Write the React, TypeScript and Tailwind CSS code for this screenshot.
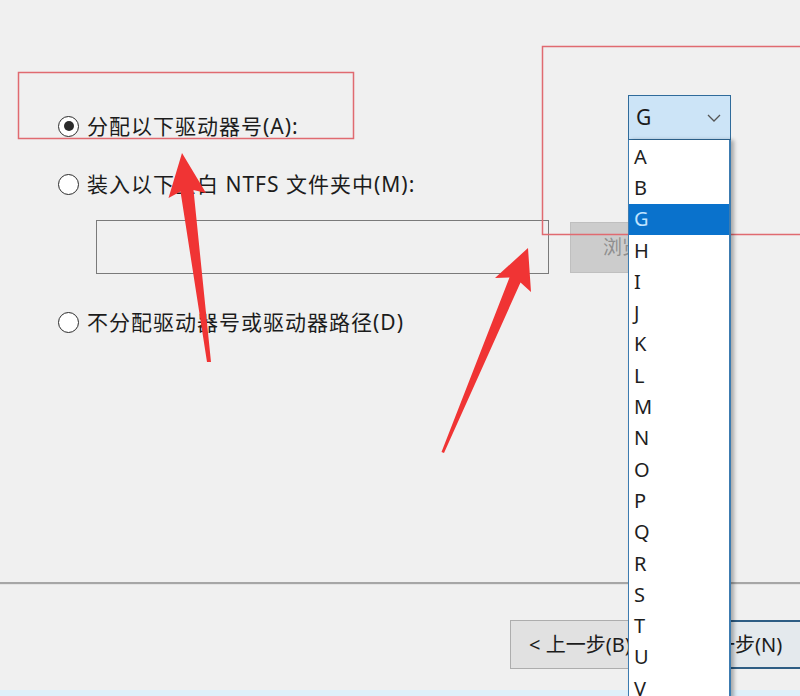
import React from "react";

const FONT = '"Noto Sans", "Noto Sans CJK SC", sans-serif';

function Radio({ checked, label }: { checked?: boolean; label: string }) {
  return (
    <div className="flex items-center h-[22px]">
      <div className="w-[21px] h-[21px] rounded-full border-[1.5px] border-[#2b2b2b] bg-white flex items-center justify-center shrink-0">
        {checked && <div className="w-[10px] h-[10px] rounded-full bg-[#2b2b2b]" />}
      </div>
      <span className="ml-[8px] text-[21px] tracking-[1px] leading-none text-[#1c1c1c] whitespace-nowrap">{label}</span>
    </div>
  );
}

const LETTERS = ["A", "B", "G", "H", "I", "J", "K", "L", "M", "N", "O", "P", "Q", "R", "S", "T", "U", "V"];

export default function App() {
  return (
    <div
      className="relative w-[800px] h-[696px] bg-[#f0f0f0] overflow-hidden flex flex-col"
      style={{ fontFamily: FONT }}
    >
      {/* top area */}
      <div className="flex pt-[95px]">
        <div className="w-[628px] shrink-0 pl-[58px] pt-[20px]">
          <Radio checked label="分配以下驱动器号(A):" />
          <div className="mt-[36px]">
            <Radio label="装入以下空白 NTFS 文件夹中(M):" />
          </div>
          <div className="flex items-center mt-[25px] ml-[38px]">
            <div className="w-[453px] h-[54px] border border-[#7a7a7a] bg-[#f0f0f0] shrink-0" />
            <div className="ml-[21px] w-[58px] h-[51px] border border-r-0 border-[#bfbfbf] bg-[#cccccc] shrink-0 flex items-center pl-[32px] text-[19px] text-[#8f8f8f] whitespace-nowrap overflow-hidden">
              浏览(R)...
            </div>
          </div>
          <div className="mt-[37px]">
            <Radio label="不分配驱动器号或驱动器路径(D)" />
          </div>
        </div>
        {/* combo box */}
        <div className="relative w-[103px] h-[45px] shrink-0">
          <div className="w-full h-full border border-[#2f6b9b] bg-[#cce4f7] flex items-center justify-between pl-[7px] pr-[9px]">
            <span className="text-[21px] text-[#1a1a1a] leading-none">G</span>
            <svg width="14" height="8" viewBox="0 0 14 8" fill="none">
              <path d="M1 1 L7 7 L13 1" stroke="#555" strokeWidth="1.3" />
            </svg>
          </div>
          <div className="absolute left-0 top-full w-full h-[600px] bg-white border-l border-r-2 border-[#3c7bb0] shadow-[3px_0_4px_rgba(0,0,0,0.3)] z-30 pt-[1px]">
            {LETTERS.map((l) => (
              <div
                key={l}
                className={`h-[31.3px] flex items-center pl-[5px] text-[20px] leading-none ${
                  l === "G" ? "bg-[#0a72cc] text-[#bfe3ff]" : "text-[#1e1e1e]"
                }`}
              >
                {l}
              </div>
            ))}
          </div>
        </div>
      </div>

      {/* bottom area */}
      <div className="mt-auto">
        <div className="h-[2px] bg-[#a6a6a6]" />
        <div className="h-[1px] bg-[#e4e4e4]" />
        <div className="flex pl-[510px] pt-[35px]">
          <div className="w-[150px] h-[49px] shrink-0 border border-[#adadad] bg-[#e1e1e1] flex items-center pl-[18px] text-[20px] text-[#1c1c1c] whitespace-nowrap">
            &lt; 上一步(B)
          </div>
          <div className="w-[150px] h-[49px] shrink-0 border-2 border-[#2e5d84] bg-[#e4e9ed] flex items-center pl-[33px] text-[20px] text-[#1c1c1c] whitespace-nowrap">
            下一步(N)
          </div>
        </div>
        <div className="h-[21px]" />
        <div className="h-[6px] bg-[#dff0fa]" />
      </div>

      {/* annotations */}
      <svg className="absolute inset-0 z-20 pointer-events-none" width="800" height="696" viewBox="0 0 800 696">
        <rect x="18.5" y="72.5" width="335" height="66" fill="none" stroke="#e06a70" strokeWidth="1.5" />
        <rect x="542.5" y="46.5" width="270" height="188" fill="none" stroke="#e06a70" strokeWidth="1.5" />
        <polygon
          points="182,153 206,193 193.5,190 211,362 207,362 180.5,191.5 168.5,198"
          fill="#f03434"
        />
        <polygon
          points="528,248 531,292 520.5,282.5 444,453 441.5,452 509.5,277.5 495,278"
          fill="#f03434"
        />
      </svg>
    </div>
  );
}
